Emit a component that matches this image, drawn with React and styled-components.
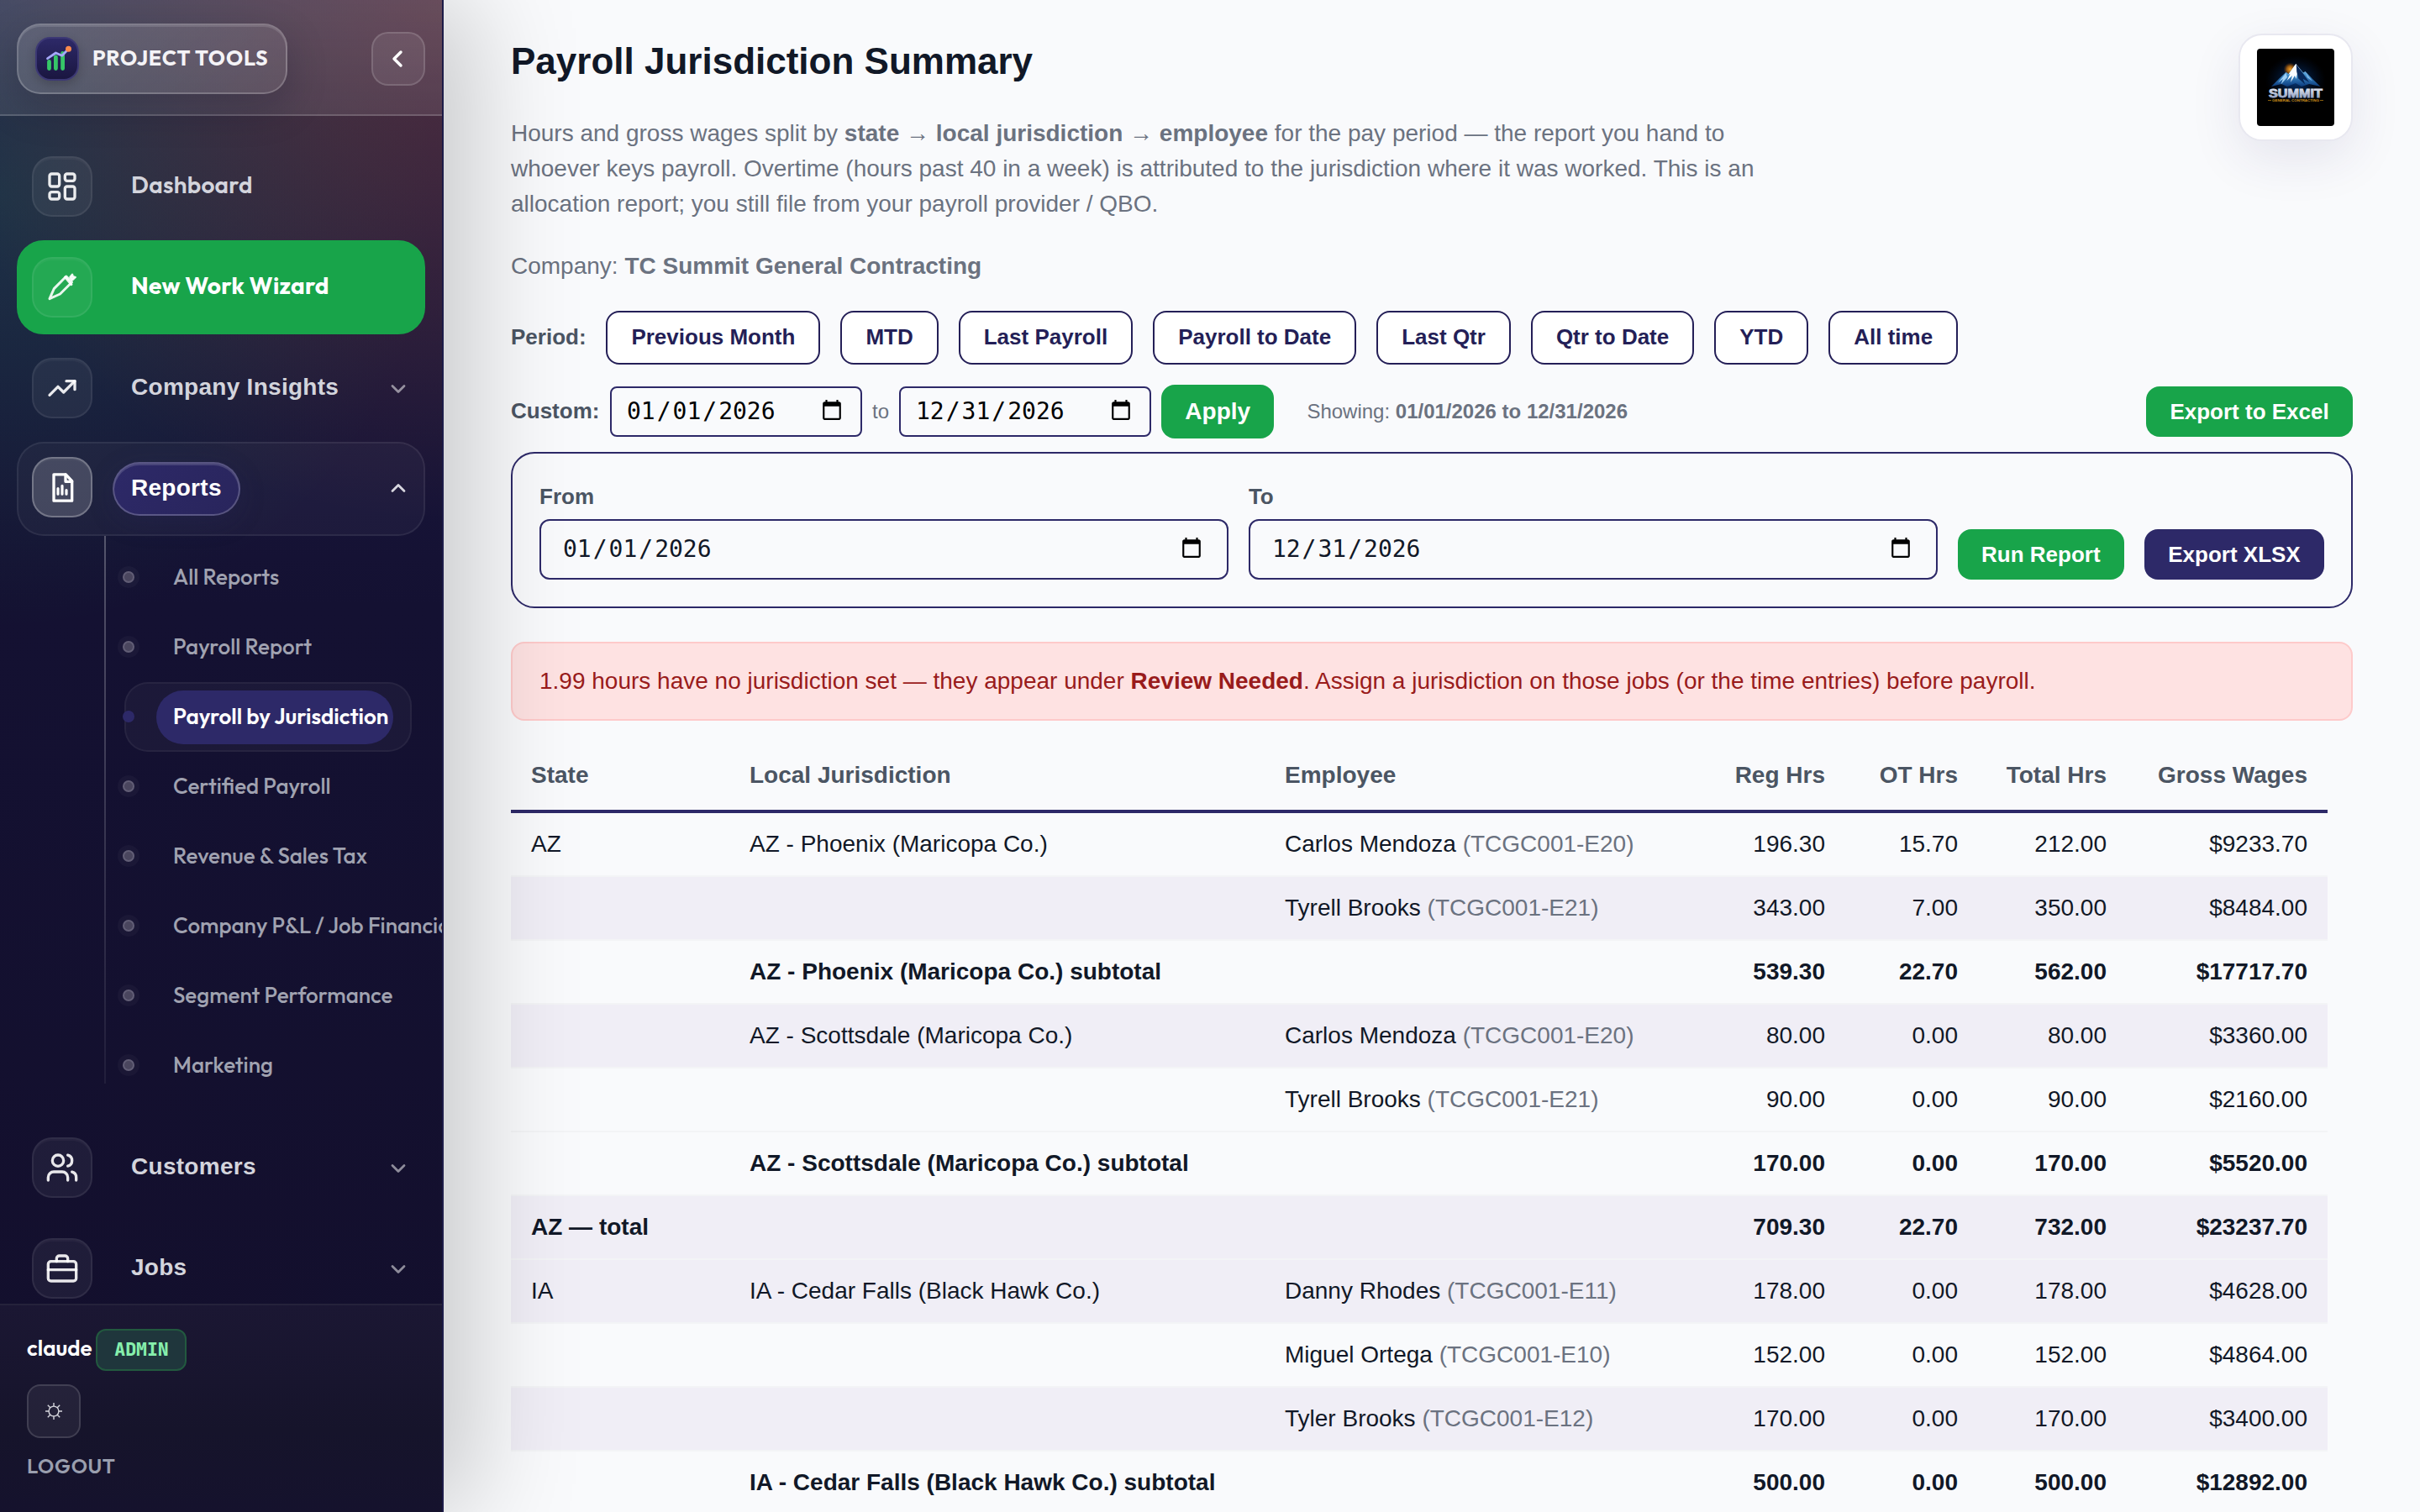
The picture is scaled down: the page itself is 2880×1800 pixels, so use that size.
import React from 'react';
import styled, { createGlobalStyle, css } from 'styled-components';

const NAVY = '#2d2968';
const GREEN = '#18a44a';
const SANS = '"Liberation Sans", Arial, Helvetica, sans-serif';
const BRAND = 'Outfit, Lato, "Liberation Sans", sans-serif';

const GlobalStyle = createGlobalStyle`
  *, *::before, *::after { box-sizing: border-box; }
  html, body { margin: 0; padding: 0; background: #f9fafc; }
  body { font-family: ${SANS}; font-size: 28px; line-height: 1.5; color: #111827; overflow: hidden; }
  h1, p { margin: 0; }
  button, input { font: inherit; margin: 0; }
`;

const Page = styled.div`
  display: flex;
  width: 2880px;
  height: 1800px;
  overflow: hidden;
`;

/* ---------- Sidebar ---------- */

const Sidebar = styled.aside`
  position: relative;
  z-index: 1;
  flex: none;
  display: flex;
  flex-direction: column;
  width: 528px;
  height: 1800px;
  border-right: 2px solid #1d1c48;
  background:
    radial-gradient(circle 620px at 100% 0, rgba(249, 115, 22, 0.21), rgba(249, 115, 22, 0.15) 35%, transparent),
    radial-gradient(circle 520px at 0 230px, rgba(34, 197, 94, 0.15), transparent),
    linear-gradient(180deg, #211d4c 0, #141132 720px, #130f2c 100%);
  box-shadow: 32px 0 120px rgba(0, 0, 0, 0.205);
`;

const SideHeader = styled.div`
  flex: none;
  display: flex;
  align-items: center;
  justify-content: space-between;
  height: 138px;
  padding: 0 20px;
  border-bottom: 2px solid rgba(255, 255, 255, 0.12);
  background: linear-gradient(180deg, rgba(255, 255, 255, 0.14), rgba(255, 255, 255, 0.09));
`;

const Brand = styled.div`
  display: flex;
  align-items: center;
  gap: 16px;
  width: 322px;
  height: 84px;
  margin-top: 4px;
  padding: 0 20px;
  border: 2px solid rgba(255, 255, 255, 0.2);
  border-radius: 28px;
  background: linear-gradient(135deg, rgba(255, 255, 255, 0.13), rgba(255, 255, 255, 0.08));
  box-shadow: inset 0 2px 0 rgba(255, 255, 255, 0.12), 0 16px 48px rgba(10, 10, 30, 0.22);
`;

const BrandMark = styled.span`
  flex: none;
  display: grid;
  place-items: center;
  width: 52px;
  height: 52px;
  border: 2px solid #3c3874;
  border-radius: 18px;
  background: linear-gradient(180deg, #2d2968, #1a1640);
  box-shadow: 0 4px 12px rgba(0, 0, 0, 0.2);
`;

const BrandName = styled.span`
  padding-bottom: 1px;
  font-family: ${BRAND};
  font-size: 25px;
  font-weight: 700;
  letter-spacing: 0.8px;
  white-space: nowrap;
  color: #f4f3f6;
`;

const CollapseButton = styled.button`
  display: grid;
  place-items: center;
  width: 64px;
  height: 64px;
  margin-top: 4px;
  padding: 0 2px 0 0;
  border: 2px solid rgba(255, 255, 255, 0.14);
  border-radius: 20px;
  background: rgba(255, 255, 255, 0.08);
  color: #fff;
`;

const Nav = styled.nav`
  flex: 1;
  min-height: 0;
  display: flex;
  flex-direction: column;
  gap: 8px;
  padding: 28px 20px 0;
  overflow: hidden;
`;

const NavItem = styled.div`
  flex: none;
  display: flex;
  align-items: center;
  height: 112px;
  padding: 0 16px;
  border: 2px solid transparent;
  border-radius: 32px;
  ${({ $tone }) => $tone === 'primary' && css`
    border-color: ${GREEN};
    background: ${GREEN};
  `}
  ${({ $tone }) => $tone === 'open' && css`
    border-color: rgba(255, 255, 255, 0.07);
    background: rgba(255, 255, 255, 0.035);
  `}
`;

const NavIcon = styled.span`
  flex: none;
  display: grid;
  place-items: center;
  width: 72px;
  height: 72px;
  margin-right: 24px;
  border: 2px solid rgba(255, 255, 255, 0.07);
  border-radius: 24px;
  background: rgba(255, 255, 255, 0.055);
  box-shadow: inset 0 2px 0 rgba(255, 255, 255, 0.035);
  color: rgba(255, 255, 255, 0.9);
  ${({ $active }) => $active && css`
    margin-bottom: 4px;
    border-color: rgba(255, 255, 255, 0.26);
    background: rgba(255, 255, 255, 0.17);
    color: #fff;
  `}
`;

const NavLabel = styled.span`
  display: flex;
  align-items: center;
  height: 64px;
  padding: 0 20px ${({ $brand }) => ($brand ? '5px' : '2px')};
  border: 2px solid transparent;
  border-radius: 32px;
  font-family: ${({ $brand }) => ($brand ? BRAND : SANS)};
  font-size: 28px;
  font-weight: ${({ $brand, $strong }) => ($brand && !$strong ? 600 : 700)};
  letter-spacing: 0.28px;
  white-space: nowrap;
  color: ${({ $strong }) => ($strong ? '#fff' : '#d3d4dc')};
  ${({ $pill }) => $pill && css`
    border-color: rgba(255, 255, 255, 0.22);
    background: linear-gradient(135deg, #2d2968, #29255c);
    box-shadow: inset 0 2px 0 rgba(255, 255, 255, 0.14), 0 8px 32px rgba(45, 41, 104, 0.2);
  `}
`;

const Caret = styled.span`
  display: grid;
  margin-left: auto;
  margin-top: ${({ $up }) => ($up ? '-2px' : '2px')};
  color: ${({ $up }) => ($up ? '#d8d7df' : 'rgba(255, 255, 255, 0.52)')};
`;

const SubNav = styled.ul`
  position: relative;
  flex: none;
  margin: 0;
  padding: 0 16px 16px 128px;
  list-style: none;

  &::before {
    content: '';
    position: absolute;
    left: 104px;
    top: -8px;
    bottom: 36px;
    width: 2px;
    background: linear-gradient(180deg, rgba(255, 255, 255, 0.27), rgba(255, 255, 255, 0.06));
  }
`;

const SubItem = styled.li`
  position: relative;
  display: flex;
  align-items: center;
  height: 83px;
  padding-left: 36px;
  border: 2px solid ${({ $active }) => ($active ? 'rgba(255, 255, 255, 0.05)' : 'transparent')};
  border-radius: 28px;
  background: ${({ $active }) => ($active ? 'rgba(255, 255, 255, 0.035)' : 'none')};

  &::before {
    content: '';
    position: absolute;
    left: -4px;
    top: 32px;
    width: 14px;
    height: 14px;
    border: 2px solid ${({ $active }) => ($active ? NAVY : '#625e76')};
    border-radius: 50%;
    background: ${({ $active }) => ($active ? NAVY : '#4a465e')};
    box-shadow: ${({ $active }) => ($active ? 'none' : '0 0 0 6px rgba(255, 255, 255, 0.03)')};
  }
`;

const SubLabel = styled.span`
  display: flex;
  align-items: center;
  height: 64px;
  width: ${({ $active }) => ($active ? '282px' : 'auto')};
  padding-left: 20px;
  padding-bottom: 2px;
  border-radius: 32px;
  font-family: ${BRAND};
  font-size: 26px;
  font-weight: ${({ $active }) => ($active ? 600 : 500)};
  white-space: nowrap;
  color: ${({ $active }) => ($active ? '#fff' : '#a0a2b0')};
  background: ${({ $active }) => ($active ? NAVY : 'none')};
`;

const SideFooter = styled.div`
  flex: none;
  display: flex;
  flex-direction: column;
  align-items: flex-start;
  gap: 16px;
  height: 248px;
  padding: 28px 32px 0;
  border-top: 2px solid rgba(255, 255, 255, 0.07);
  background: linear-gradient(180deg, #1b1733, #16142b 60%, #15122d);
`;

const UserRow = styled.div`
  display: flex;
  align-items: center;
  gap: 4px;
  height: 50px;
`;

const UserName = styled.span`
  width: 78px;
  padding-bottom: 4px;
  font-family: ${BRAND};
  font-size: 26px;
  font-weight: 600;
  line-height: 1;
  color: #fff;
`;

const RoleBadge = styled.span`
  display: grid;
  place-items: center;
  width: 108px;
  height: 50px;
  padding-left: 1px;
  border: 2px solid #22593f;
  border-radius: 12px;
  background: #1f363c;
  font-family: "JetBrains Mono", "Liberation Mono", monospace;
  font-size: 21.5px;
  font-weight: 800;
  line-height: 1;
  color: #86efac;
`;

const ThemeButton = styled.button`
  display: grid;
  place-items: center;
  width: 64px;
  height: 64px;
  padding: 0;
  border: 2px solid rgba(255, 255, 255, 0.13);
  border-radius: 16px;
  background: rgba(255, 255, 255, 0.06);
  color: #d5d5dc;
`;

const Logout = styled.span`
  font-family: ${BRAND};
  font-size: 24px;
  font-weight: 600;
  letter-spacing: 0.72px;
  line-height: 34px;
  color: #9a9fae;
`;

/* ---------- Main ---------- */

const Main = styled.main`
  flex: 1;
  min-width: 0;
  padding: 40px 80px 0;
  overflow: hidden;
`;

const PageHeader = styled.header`
  display: flex;
  justify-content: space-between;
  align-items: flex-start;
`;

const Title = styled.h1`
  margin-bottom: 32px;
  font-size: 44px;
  font-weight: 700;
  line-height: 66px;
`;

const Lead = styled.p`
  max-width: 1520px;
  margin-bottom: 32px;
  color: #6b7280;
`;

const LogoCard = styled.div`
  flex: none;
  width: 136px;
  height: 128px;
  padding: 16px 20px;
  border: 2px solid #e8e8f0;
  border-radius: 28px;
  background: #fff;
  box-shadow: 0 20px 60px rgba(45, 41, 104, 0.1);

  svg { display: block; border-radius: 4px; }
`;

const PeriodRow = styled.div`
  display: flex;
  align-items: center;
  gap: 24px;
  margin-bottom: 24px;
`;

const Label = styled.span`
  font-size: 26px;
  font-weight: 700;
  color: #4b5563;
`;

const RowLabel = styled(Label)`
  flex: none;
  width: ${({ $w }) => $w}px;
  padding-bottom: 2px;
`;

const Chip = styled.button`
  height: 64px;
  padding: 0 28px 2px;
  border: 2px solid #241f57;
  border-radius: 16px;
  background: #fff;
  font-size: 26px;
  font-weight: 700;
  color: #241f57;
`;

const CustomRow = styled.div`
  display: flex;
  align-items: center;
  gap: 12px;
  height: 64px;
  margin-bottom: 16px;
`;

const DateInput = styled.input`
  border: 2px solid ${NAVY};
  background: transparent;
  font-family: "DejaVu Sans Mono", monospace;
  font-size: 28px;
  line-height: normal;
  outline: none;
  ${({ $wide }) => ($wide ? css`
    width: 100%;
    height: 72px;
    padding: 0 24px 2px;
    border-radius: 12px;
    color: #111827;
  ` : css`
    width: 300px;
    height: 60px;
    padding: 0 16px 2px;
    border-radius: 8px;
    color: #000;
  `)}

  &::-webkit-datetime-edit-month-field,
  &::-webkit-datetime-edit-day-field,
  &::-webkit-datetime-edit-year-field { padding: 2px; }

  &::-webkit-calendar-picker-indicator { padding: 4px; }
`;

const Muted = styled.span`
  font-size: 24px;
  color: #6b7280;
`;

const Showing = styled(Muted)`
  margin-left: 27px;
`;

const Button = styled.button`
  flex: none;
  height: ${({ $large }) => ($large ? '64px' : '60px')};
  margin-left: ${({ $end }) => ($end ? 'auto' : '0')};
  padding: 0 28.3px;
  border: 0;
  border-radius: 16px;
  background: ${({ $navy }) => ($navy ? NAVY : GREEN)};
  font-size: ${({ $large }) => ($large ? '28px' : '26px')};
  font-weight: 700;
  color: #fff;
`;

const FilterCard = styled.section`
  display: flex;
  align-items: flex-end;
  gap: 24px;
  height: 186px;
  padding: 32px;
  border: 2px solid ${NAVY};
  border-radius: 28px;
`;

const Field = styled.label`
  flex: 1;
  display: flex;
  flex-direction: column;
  gap: 7px;
`;

const Alert = styled.div`
  margin-top: 40px;
  padding: 24px 32px;
  border: 2px solid #fecaca;
  border-radius: 16px;
  background: #fee2e2;
  color: #991b1b;
`;

const Table = styled.table`
  width: 2162px;
  margin-top: 28px;
  border-collapse: separate;
  border-spacing: 0;
  table-layout: fixed;
`;

const Col = styled.col`
  width: ${({ $w }) => $w}px;
`;

const Th = styled.th`
  padding: 16px 24px 20px;
  border-bottom: 4px solid ${NAVY};
  text-align: ${({ $num }) => ($num ? 'right' : 'left')};
  font-weight: 700;
  color: #4b5563;
`;

const Td = styled.td`
  height: 76px;
  padding: 16px 24px;
  border-bottom: 2px solid #f3f4f6;
  text-align: ${({ $num }) => ($num ? 'right' : 'left')};
  white-space: nowrap;
`;

const Tr = styled.tr`
  font-weight: ${({ $strong }) => ($strong ? 700 : 400)};
  background: ${({ $shade }) => ($shade ? '#f0eef6' : 'transparent')};
`;

const EmpId = styled.span`
  color: #6b7280;
`;

/* ---------- Icons ---------- */

const StrokeIcon = ({ size = 40, width = 2, children }) => (
  <svg width={size} height={size} viewBox="0 0 24 24" fill="none" stroke="currentColor"
    strokeWidth={width} strokeLinecap="round" strokeLinejoin="round">
    {children}
  </svg>
);

const DashboardIcon = () => (
  <StrokeIcon>
    <rect x="3" y="3" width="7" height="9" rx="1.5" />
    <rect x="14" y="3" width="7" height="5" rx="1.5" />
    <rect x="14" y="12" width="7" height="9" rx="1.5" />
    <rect x="3" y="16" width="7" height="5" rx="1.5" />
  </StrokeIcon>
);

const WizardIcon = () => (
  <StrokeIcon>
    <path d="M3 20.2 6.2 13l8.7-8.8 4 4.2-8.4 8.4z" strokeWidth="1.8" />
    <path d="M14.2 4.8 18.6 10" strokeWidth="1.8" />
    <path d="m19.2 2.8.5 1.5 1.8.5-1.3 1.2-1.2 1-1.4-2.2z" fill="currentColor" strokeWidth="1.4" />
  </StrokeIcon>
);

const TrendIcon = () => (
  <StrokeIcon>
    <path d="m3 17 6-6 4 4 8-8" />
    <path d="M15 7h6v6" />
  </StrokeIcon>
);

const ReportIcon = () => (
  <StrokeIcon>
    <path d="M6 2.9h8.6L19 7.6v14.1H6z" />
    <path d="M14.4 3v5H19" />
    <path d="M9 12.9v4M12 11v5.9M15 14.1v2.8" strokeWidth="1.9" />
  </StrokeIcon>
);

const UsersIcon = () => (
  <StrokeIcon>
    <path d="M16 21v-2a4 4 0 0 0-4-4H6a4 4 0 0 0-4 4v2" />
    <circle cx="9" cy="7" r="4" />
    <path d="M22 21v-2a4 4 0 0 0-3-3.87" />
    <path d="M16 3.13a4 4 0 0 1 0 7.75" />
  </StrokeIcon>
);

const BriefcaseIcon = () => (
  <StrokeIcon>
    <rect x="2" y="7" width="20" height="14" rx="2" />
    <path d="M8 7V5a2 2 0 0 1 2-2h4a2 2 0 0 1 2 2v2" />
    <path d="M2 13h20" />
  </StrokeIcon>
);

const Chevron = ({ up }) => (
  <StrokeIcon size={28} width={2.4}>
    <path d={up ? 'm6 15 6-6 6 6' : 'm6 9 6 6 6-6'} />
  </StrokeIcon>
);

const SunIcon = () => (
  <svg width="22" height="22" viewBox="0 0 22 22" fill="none" stroke="currentColor" strokeWidth="1.4">
    <circle cx="11" cy="11" r="5.9" />
    <path d="M11 1v4M11 17v4M1 11h4M17 11h4M3.800 3.800l3 3M15.200 15.200l3 3M3.800 18.200l3-3M15.200 6.800l3-3" />
  </svg>
);

const ChartMark = () => (
  <svg width="36" height="40" viewBox="0 0 36 40" fill="none" strokeLinecap="round">
    <g stroke="#36c768" strokeWidth="4.8">
      <path d="M8.500 23.400v8.200M16.400 18v13.600M24.600 13.400v18.200" />
    </g>
    <path d="M6.500 19.700 16.400 13l7.400 3.200 7.200-7.500" stroke="#a5a8fb" strokeWidth="2.800" strokeLinejoin="round" />
    <circle cx="31.500" cy="8.300" r="3.500" fill="#fb8a4c" />
  </svg>
);

const SummitLogo = () => (
  <svg width="92" height="92" viewBox="0 0 92 92">
    <defs>
      <radialGradient id="glow">
        <stop offset="0" stopColor="#0b4fa8" stopOpacity="0.75" />
        <stop offset="1" stopColor="#031a45" stopOpacity="0" />
      </radialGradient>
      <radialGradient id="sun">
        <stop offset="0" stopColor="#f7a62c" />
        <stop offset="0.5" stopColor="#c8720c" stopOpacity="0.75" />
        <stop offset="1" stopColor="#7a3d05" stopOpacity="0" />
      </radialGradient>
      <linearGradient id="rock" x1="0" y1="0" x2="0" y2="1">
        <stop offset="0" stopColor="#dcefff" />
        <stop offset="0.5" stopColor="#3f8fcd" />
        <stop offset="1" stopColor="#0a3a7c" />
      </linearGradient>
      <linearGradient id="steel" x1="0" y1="0" x2="0" y2="1">
        <stop offset="0" stopColor="#eef2f9" />
        <stop offset="1" stopColor="#8292b8" />
      </linearGradient>
    </defs>
    <rect width="92" height="92" fill="#000" />
    <ellipse cx="46" cy="38" rx="36" ry="30" fill="url(#glow)" />
    <circle cx="39.5" cy="24.5" r="8" fill="url(#sun)" />
    <path d="M17 45 27 35l7.5-7 3 2L46.3 18 55 28.5l2.5-1.5L66 36l9.500 9-13.500-3-9 3-7-4-10 4-7-3z" fill="url(#rock)" />
    <path d="m46.3 18-8.800 12.500 2-.5-4 8 6.500-6-2 8 5-8 1.500 4 1.500-7z" fill="#f7fbff" />
    <path d="m46.800 19 8.500 11 7 10-7.500-4 2.500 6.500-8-7-2-8z" fill="#07285a" />
    <path d="m34.500 29-9.500 11.500 6-4.500-2.500 6.500 7.500-8.500z" fill="#9fd0f5" />
    <path d="m57.500 28 8.500 10.500-6-4z" fill="#7fb6e6" />
    <text x="46" y="58" textAnchor="middle" textLength="64" lengthAdjust="spacingAndGlyphs"
      fontFamily="Liberation Sans, Arial, sans-serif" fontSize="14" fontWeight="700"
      fill="url(#steel)" stroke="url(#steel)" strokeWidth="0.9">SUMMIT</text>
    <path d="M13 61.500h4M75 61.500h4" stroke="#a87512" strokeWidth="0.8" />
    <text x="46" y="63" textAnchor="middle" textLength="56" lengthAdjust="spacingAndGlyphs"
      fontFamily="Liberation Sans, Arial, sans-serif" fontSize="4" fontWeight="700"
      fill="#d1921a">GENERAL CONTRACTING</text>
  </svg>
);

/* ---------- Data ---------- */

const SUB_ITEMS = [
  'All Reports',
  'Payroll Report',
  'Payroll by Jurisdiction',
  'Certified Payroll',
  'Revenue & Sales Tax',
  'Company P&L / Job Financials',
  'Segment Performance',
  'Marketing',
];
const ACTIVE_SUB = 'Payroll by Jurisdiction';

const PERIODS = ['Previous Month', 'MTD', 'Last Payroll', 'Payroll to Date', 'Last Qtr', 'Qtr to Date', 'YTD', 'All time'];

const COLUMNS = [
  ['State', 260], ['Local Jurisdiction', 637], ['Employee', 513],
  ['Reg Hrs', 178, true], ['OT Hrs', 158, true], ['Total Hrs', 177, true], ['Gross Wages', 239, true],
];

const ROWS = [
  { state: 'AZ', local: 'AZ - Phoenix (Maricopa Co.)', emp: 'Carlos Mendoza', id: 'TCGC001-E20', nums: ['196.30', '15.70', '212.00', '$9233.70'] },
  { emp: 'Tyrell Brooks', id: 'TCGC001-E21', nums: ['343.00', '7.00', '350.00', '$8484.00'], shade: true },
  { local: 'AZ - Phoenix (Maricopa Co.) subtotal', nums: ['539.30', '22.70', '562.00', '$17717.70'], strong: true },
  { local: 'AZ - Scottsdale (Maricopa Co.)', emp: 'Carlos Mendoza', id: 'TCGC001-E20', nums: ['80.00', '0.00', '80.00', '$3360.00'], shade: true },
  { emp: 'Tyrell Brooks', id: 'TCGC001-E21', nums: ['90.00', '0.00', '90.00', '$2160.00'] },
  { local: 'AZ - Scottsdale (Maricopa Co.) subtotal', nums: ['170.00', '0.00', '170.00', '$5520.00'], strong: true },
  { state: 'AZ — total', nums: ['709.30', '22.70', '732.00', '$23237.70'], strong: true, shade: true },
  { state: 'IA', local: 'IA - Cedar Falls (Black Hawk Co.)', emp: 'Danny Rhodes', id: 'TCGC001-E11', nums: ['178.00', '0.00', '178.00', '$4628.00'], shade: true },
  { emp: 'Miguel Ortega', id: 'TCGC001-E10', nums: ['152.00', '0.00', '152.00', '$4864.00'] },
  { emp: 'Tyler Brooks', id: 'TCGC001-E12', nums: ['170.00', '0.00', '170.00', '$3400.00'], shade: true },
  { local: 'IA - Cedar Falls (Black Hawk Co.) subtotal', nums: ['500.00', '0.00', '500.00', '$12892.00'], strong: true },
];

/* ---------- App ---------- */

export default function App() {
  return (
    <>
      <GlobalStyle />
      <Page>
        <Sidebar>
          <SideHeader>
            <Brand>
              <BrandMark><ChartMark /></BrandMark>
              <BrandName>PROJECT TOOLS</BrandName>
            </Brand>
            <CollapseButton aria-label="Collapse sidebar">
              <StrokeIcon size={32} width={2.6}><path d="m15 18-6-6 6-6" /></StrokeIcon>
            </CollapseButton>
          </SideHeader>
          <Nav>
            <NavItem>
              <NavIcon><DashboardIcon /></NavIcon>
              <NavLabel $brand>Dashboard</NavLabel>
            </NavItem>
            <NavItem $tone="primary">
              <NavIcon><WizardIcon /></NavIcon>
              <NavLabel $brand $strong>New Work Wizard</NavLabel>
            </NavItem>
            <NavItem>
              <NavIcon><TrendIcon /></NavIcon>
              <NavLabel>Company Insights</NavLabel>
              <Caret><Chevron /></Caret>
            </NavItem>
            <NavItem $tone="open">
              <NavIcon $active><ReportIcon /></NavIcon>
              <NavLabel $pill $strong>Reports</NavLabel>
              <Caret $up><Chevron up /></Caret>
            </NavItem>
            <SubNav>
              {SUB_ITEMS.map((label) => (
                <SubItem key={label} $active={label === ACTIVE_SUB}>
                  <SubLabel $active={label === ACTIVE_SUB}>{label}</SubLabel>
                </SubItem>
              ))}
            </SubNav>
            <NavItem>
              <NavIcon><UsersIcon /></NavIcon>
              <NavLabel>Customers</NavLabel>
              <Caret><Chevron /></Caret>
            </NavItem>
            <NavItem>
              <NavIcon><BriefcaseIcon /></NavIcon>
              <NavLabel>Jobs</NavLabel>
              <Caret><Chevron /></Caret>
            </NavItem>
          </Nav>
          <SideFooter>
            <UserRow>
              <UserName>claude</UserName>
              <RoleBadge>ADMIN</RoleBadge>
            </UserRow>
            <ThemeButton aria-label="Toggle theme"><SunIcon /></ThemeButton>
            <Logout>LOGOUT</Logout>
          </SideFooter>
        </Sidebar>

        <Main>
          <PageHeader>
            <div>
              <Title>Payroll Jurisdiction Summary</Title>
              <Lead>
                Hours and gross wages split by <b>state</b> → <b>local jurisdiction</b> → <b>employee</b> for the
                pay period — the report you hand to whoever keys payroll. Overtime (hours past 40 in a week) is
                attributed to the jurisdiction where it was worked. This is an allocation report; you still file
                from your payroll provider / QBO.
              </Lead>
              <Lead>Company: <b>TC Summit General Contracting</b></Lead>
            </div>
            <LogoCard><SummitLogo /></LogoCard>
          </PageHeader>

          <PeriodRow>
            <RowLabel $w={89.4}>Period:</RowLabel>
            {PERIODS.map((p) => <Chip key={p}>{p}</Chip>)}
          </PeriodRow>

          <CustomRow>
            <RowLabel $w={106}>Custom:</RowLabel>
            <DateInput type="date" defaultValue="2026-01-01" />
            <Muted>to</Muted>
            <DateInput type="date" defaultValue="2026-12-31" />
            <Button $large>Apply</Button>
            <Showing>Showing: <b>01/01/2026 to 12/31/2026</b></Showing>
            <Button $end>Export to Excel</Button>
          </CustomRow>

          <FilterCard>
            <Field>
              <Label>From</Label>
              <DateInput $wide type="date" defaultValue="2026-01-01" />
            </Field>
            <Field>
              <Label>To</Label>
              <DateInput $wide type="date" defaultValue="2026-12-31" />
            </Field>
            <Button>Run Report</Button>
            <Button $navy>Export XLSX</Button>
          </FilterCard>

          <Alert>
            1.99 hours have no jurisdiction set — they appear under <b>Review Needed</b>. Assign a jurisdiction on
            those jobs (or the time entries) before payroll.
          </Alert>

          <Table>
            <colgroup>
              {COLUMNS.map(([name, w]) => <Col key={name} $w={w} />)}
            </colgroup>
            <thead>
              <tr>
                {COLUMNS.map(([name, , num]) => <Th key={name} $num={num}>{name}</Th>)}
              </tr>
            </thead>
            <tbody>
              {ROWS.map((row, i) => (
                <Tr key={i} $strong={row.strong} $shade={row.shade}>
                  <Td>{row.state}</Td>
                  <Td>{row.local}</Td>
                  <Td>{row.emp && <>{row.emp} <EmpId>({row.id})</EmpId></>}</Td>
                  {row.nums.map((n, j) => <Td key={j} $num>{n}</Td>)}
                </Tr>
              ))}
            </tbody>
          </Table>
        </Main>
      </Page>
    </>
  );
}
